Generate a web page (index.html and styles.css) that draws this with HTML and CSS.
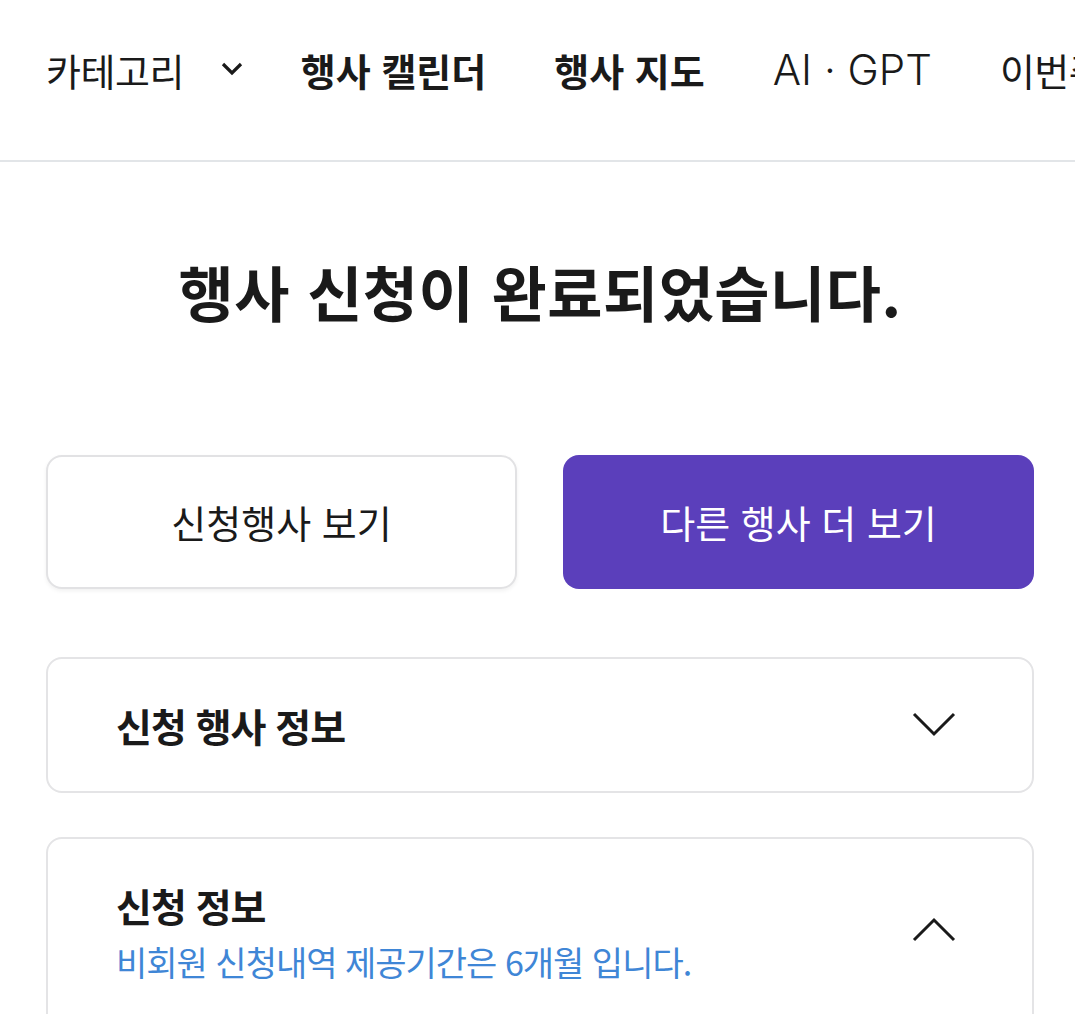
FILE: index.html
```html
<!DOCTYPE html>
<html lang="ko">
<head>
<meta charset="utf-8">
<link rel="stylesheet" href="styles.css">
</head>
<body>
<nav class="nav">
  <div class="nav-item">카테고리
    <svg class="nav-chev" width="24" height="16" viewBox="0 0 24 16"><path d="M3 3l9 9 9-9" fill="none" stroke="#1a1a1a" stroke-width="3.2"/></svg>
  </div>
  <div class="nav-item bold">행사 캘린더</div>
  <div class="nav-item bold">행사 지도</div>
  <div class="nav-item latin">AI · GPT</div>
  <div class="nav-item">이번주 행사</div>
</nav>
<main class="main">
  <h1 class="title">행사 신청이 완료되었습니다.</h1>
  <div class="actions">
    <button class="btn btn-outline">신청행사 보기</button>
    <button class="btn btn-primary">다른 행사 더 보기</button>
  </div>
  <section class="card">
    <div class="card-head">
      <div class="card-title">신청 행사 정보</div>
      <svg class="chev" width="44" height="28" viewBox="0 0 44 28"><path d="M2 3l20 20 20-20" fill="none" stroke="#1a1a1a" stroke-width="3"/></svg>
    </div>
  </section>
  <section class="card card-open">
    <div class="card-head">
      <div>
        <div class="card-title">신청 정보</div>
        <div class="card-note">비회원 신청내역 제공기간은 6개월 입니다.</div>
      </div>
      <svg class="chev chev-up" width="44" height="28" viewBox="0 0 44 28"><path d="M2 25l20-20 20 20" fill="none" stroke="#1a1a1a" stroke-width="3"/></svg>
    </div>
  </section>
</main>
</body>
</html>
```
FILE: styles.css
```css
* { box-sizing: border-box; }
html, body { margin: 0; padding: 0; background: #fff; overflow: hidden; }
body {
  font-family: "Noto Sans CJK KR", "Noto Sans", sans-serif;
  color: #1a1a1a;
  width: 1075px;
  height: 1014px;
}
.nav {
  height: 162px;
  border-bottom: 2px solid #e2e5e8;
  display: flex;
  align-items: center;
  padding: 0 0 22px 46px;
  white-space: nowrap;
  overflow: hidden;
}
.nav-item {
  font-size: 38px;
  letter-spacing: -0.5px;
  font-weight: 400;
  margin-right: 68px;
  display: flex;
  align-items: center;
  flex-shrink: 0;
}
.nav-item.bold { font-weight: 700; letter-spacing: 0; }
.nav-item.latin { font-family: "Inter", "Noto Sans CJK KR", sans-serif; font-weight: 300; letter-spacing: 0; font-size: 42px; }
.nav-chev { margin-left: 36px; margin-right: -11px; }
.main { padding: 0 41px 0 46px; }
.title {
  margin: 93px 0 0;
  text-align: center;
  font-size: 60px;
  font-weight: 700;
  letter-spacing: 0.5px;
  line-height: 1.2;
}
.actions {
  display: grid;
  grid-template-columns: 1fr 1fr;
  gap: 46px;
  margin-top: 128px;
}
.btn {
  height: 134px;
  border-radius: 16px;
  font-family: inherit;
  font-size: 38px;
  letter-spacing: 0;
  cursor: pointer;
  padding-bottom: 2px;
}
.btn-outline {
  background: #fff;
  border: 2px solid #e2e2e4;
  color: #1a1a1a;
  box-shadow: 0 2px 4px rgba(0,0,0,0.06);
}
.btn-primary {
  background: #5b3fbb;
  border: none;
  color: #fff;
}
.card {
  border: 2px solid #e4e4e6;
  border-radius: 16px;
  margin-top: 68px;
}
.card + .card { margin-top: 44px; }
.card-head {
  display: flex;
  justify-content: space-between;
  align-items: center;
  padding: 0 76px 0 68px;
  min-height: 132px;
}
.card-open .card-head { padding-top: 38px; }
.chev-up { margin-top: -6px; }
.card-title {
  font-size: 39px;
  font-weight: 700;
  letter-spacing: -1px;
}
.card-note {
  margin-top: 4px;
  font-size: 34px;
  color: #3f86d6;
  letter-spacing: -1px;
}
.card-open { height: 300px; }
```
